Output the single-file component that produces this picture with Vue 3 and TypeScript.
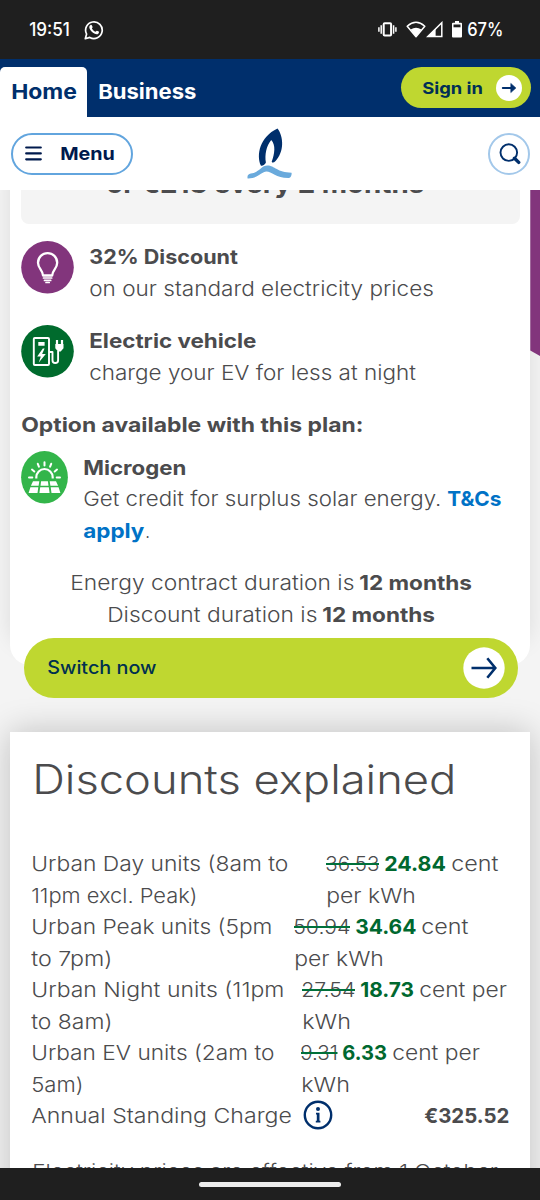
<script setup lang="ts">
import { h, type FunctionalComponent } from 'vue'

interface RunProps { t: string; w: number; s?: number; b?: number; lh?: number; strike?: boolean }

// One run of text, set to a fixed measure so that columns and lines keep their widths.
const Run: FunctionalComponent<RunProps> = (p) => {
  const lh = p.lh ?? 31.5
  const base = p.b ?? 22
  return h('svg', { class: 'run', width: p.w, height: lh }, [
    h('text', {
      x: -0.8, y: base, textLength: p.w + 1.2, lengthAdjust: 'spacingAndGlyphs', 'font-size': p.s ?? 20.3,
    }, p.t),
    p.strike ? h('rect', { class: 'strike', x: 0, y: base - 8, width: p.w, height: 2 }) : null,
  ])
}
Run.props = { t: String, w: Number, s: Number, b: Number, lh: Number, strike: Boolean }

interface Cell { t: string; w: number }
interface Rate { label: Cell[]; offset: number; old: Cell; price: Cell; unit: Cell; rest: Cell }

const rates: Rate[] = [
  { label: [{ t: 'Urban Day units (8am to', w: 256 }, { t: '11pm excl. Peak)', w: 165 }], offset: 294.5, old: { t: '36.53', w: 53 }, price: { t: '24.84', w: 60.5 }, unit: { t: 'cent', w: 46 }, rest: { t: 'per kWh', w: 88.5 } },
  { label: [{ t: 'Urban Peak units (5pm', w: 240 }, { t: 'to 7pm)', w: 80 }], offset: 262.5, old: { t: '50.94', w: 56 }, price: { t: '34.64', w: 60 }, unit: { t: 'cent', w: 46 }, rest: { t: 'per kWh', w: 88.5 } },
  { label: [{ t: 'Urban Night units (11pm', w: 252 }, { t: 'to 8am)', w: 80 }], offset: 270.5, old: { t: '27.54', w: 53 }, price: { t: '18.73', w: 52.5 }, unit: { t: 'cent per', w: 86.5 }, rest: { t: 'kWh', w: 47.5 } },
  { label: [{ t: 'Urban EV units (2am to', w: 242 }, { t: '5am)', w: 51 }], offset: 269, old: { t: '9.31', w: 36.5 }, price: { t: '6.33', w: 43.5 }, unit: { t: 'cent per', w: 86.5 }, rest: { t: 'kWh', w: 47.5 } },
]
</script>

<template>
  <div class="screen">
    <div class="status">
      <Run class="medium" t="19:51" :w="39.5" :s="18" :lh="24" :b="19" />
      <svg class="wa" width="20" height="20" viewBox="0 0 20 20">
        <path d="M1.3 18.7l1.3-4.6A8.3 8.3 0 1 1 5.8 17.400z" fill="none" stroke="#fff" stroke-width="1.7" stroke-linejoin="round" />
        <path d="M6.300 5.200c.6-.6 1.200-.5 1.500.1l.8 1.800c.1.500-.5 1-.7 1.400.9 1.600 2 2.600 3.600 3.300.5-.3.900-1.200 1.400-1.100l1.900.9c.5.400.1 1.500-.5 2.100-2.500 2.200-9.400-3.400-9-6.700 0-.6.5-1.400 1-1.800z" fill="#fff" />
      </svg>
      <span class="grow"></span>
      <svg class="vib" width="19" height="15" viewBox="0 0 19 15">
        <rect x="5.700" y="1.300" width="7.400" height="12.200" rx="1" fill="none" stroke="#fff" stroke-width="2" />
        <path d="M3.200 3.200v8.600M.9 5.200v4.500M15.600 3.200v8.600M17.900 5.200v4.500" stroke="#fff" stroke-width="1.500" />
      </svg>
      <svg class="wifi" width="20" height="17" viewBox="0 0 20 17">
        <path d="M1.200 5.200Q10-2.600 18.800 5.200L10 15.700z" fill="none" stroke="#fff" stroke-width="1.500" stroke-linejoin="round" />
        <path d="M4.600 8.500Q10 4.800 15.400 8.500L10 15.800z" fill="#fff" />
      </svg>
      <svg class="cell" width="17" height="17" viewBox="0 0 17 17">
        <path d="M1.800 15.500L15.800 1.700v13.800z" fill="none" stroke="#fff" stroke-width="1.500" />
        <path d="M1 16.100L9.600 7.700v8.400z" fill="#fff" />
      </svg>
      <svg class="bat" width="10" height="17" viewBox="0 0 10 17">
        <path d="M3 0h4v1.700h2q1 0 1 1V15.500q0 1-1 1H1q-1 0-1-1V2.700q0-1 1-1h2z" fill="#fff" />
        <path d="M1.500 3.500h7v2.800h-7z" fill="#1f1f1f" />
      </svg>
      <Run class="medium" t="67%" :w="35" :s="18" :lh="24" :b="19" />
    </div>

    <nav class="topbar">
      <div class="tab"><Run t="Home" :w="64.500" :s="20.5" /></div>
      <div class="biz"><Run t="Business" :w="97" :s="20.5" /></div>
      <div class="signin">
        <Run t="Sign in" :w="59.500" :s="16.5" :lh="24" :b="17.500" />
        <svg width="26" height="26" viewBox="0 0 26 26">
          <circle cx="13" cy="13" r="13" fill="#fff" />
          <path d="M6.800 13h9.500" stroke="#002f6c" stroke-width="2" stroke-linecap="round" />
          <path d="M14.800 8.400l5.100 4.600-5.100 4.600z" fill="#002f6c" stroke="#002f6c" stroke-width=".6" stroke-linejoin="round" />
        </svg>
      </div>
    </nav>

    <header class="header">
      <div class="menu">
        <svg width="17" height="15" viewBox="0 0 17 15"><path d="M1.200 1.500h14.600M1.200 7.400h14.600M1.200 13.300h14.600" stroke="#001a4d" stroke-width="2.200" stroke-linecap="round" /></svg>
        <Run t="Menu" :w="53.500" :s="18" :lh="24" :b="18" />
      </div>
      <svg class="logo" width="46" height="54" viewBox="0 0 46 54">
        <path d="M13.800 38.500C9.300 28 12.500 10 30.500 1.500 36.700 9.500 37.500 25 28.300 34.300c-1.400 1.500-3.200 1.800-3.600.4C27.600 27 29 18 24.200 13 19.200 19 17.600 28 18.900 35.500c-.8 1.800-3.400 3.800-5.100 3z" fill="#002f6c" />
        <path d="M.6 51.500c-.6-3 .6-4.800 3.200-5.100C12 46 14 38.600 20.500 38.600c7 0 10 7.100 24 7.200.6 1.800-.6 4.900-2.500 5.200C29.500 51.300 24.500 44.500 19.500 44.500 14.500 44.500 11 51.800.6 51.500z" fill="#6aaadc" />
      </svg>
      <div class="search">
        <svg width="22" height="22" viewBox="0 0 22 22">
          <circle cx="9.800" cy="9.600" r="8.300" fill="none" stroke="#002f6c" stroke-width="1.900" />
          <path d="M15.500 15.300l4.200 4.100" stroke="#002f6c" stroke-width="3.400" stroke-linecap="round" />
        </svg>
      </div>
    </header>

    <main class="page">
      <section class="plan">
        <div class="price"><Run class="bold" t="or €213 every 2 months" :w="317" :s="25" :lh="32" :b="26" /></div>

        <div class="feature">
          <svg class="badge" width="53" height="53" viewBox="0 0 53 53">
            <circle cx="26.500" cy="26.300" r="26.300" fill="#82357c" />
            <path d="M22 34.500c0-5-5-6.800-5-12.800a9.600 9.600 0 0 1 19.200 0c0 6-5 7.800-5 12.800z" fill="none" stroke="#fff" stroke-width="2.300" stroke-linejoin="round" />
            <path d="M22.500 37h8.200M23.500 39.400h6.200M25 41.500h3.200" stroke="#fff" stroke-width="1.700" stroke-linecap="round" />
          </svg>
          <div class="copy">
            <Run class="bold" t="32% Discount" :w="147.500" />
            <Run t="on our standard electricity prices" :w="343.500" />
          </div>
        </div>

        <div class="feature">
          <svg class="badge" width="53" height="53" viewBox="0 0 53 53">
            <circle cx="26.500" cy="26.300" r="26.300" fill="#006b2d" />
            <g fill="none" stroke="#fff" stroke-width="1.900" stroke-linejoin="round">
              <rect x="12.800" y="13" width="15.200" height="27" rx="1" />
              <path d="M28 27h3.500v8.200q0 2.800 2.800 2.800t2.800-2.800V26" />
              <path d="M36 15v4M41 15v4" stroke-width="2.200" />
            </g>
            <path d="M17.300 17h6.300v3.800h-6.300zM21.800 23.500l-5.600 8h3.600l-2 6 7-8.500h-3.700l2.500-5.500zM34.300 19h8.200v4.200l-2.800 3.300h-2.700l-2.700-3.300z" fill="#fff" />
          </svg>
          <div class="copy">
            <Run class="bold" t="Electric vehicle" :w="166" />
            <Run t="charge your EV for less at night" :w="325.500" />
          </div>
        </div>

        <div class="option"><Run class="bold" t="Option available with this plan:" :w="341" /></div>

        <div class="feature micro">
          <svg class="badge" width="47" height="53" viewBox="0 0 47 53">
            <ellipse cx="23.500" cy="26.300" rx="23.400" ry="26.200" fill="#33b54a" />
            <path d="M15.300 27.500v-1.300a8.200 8.200 0 0 1 16.400 0v1.300" fill="none" stroke="#fff" stroke-width="2.200" />
            <path d="M23.500 11.200v3.200M16.800 12.800l1.100 2.900M30.200 12.800l-1.100 2.900M11 18.600l2.300 1.900M36 18.600l-2.300 1.900M8 26.500h3.300M35.700 26.500H39" stroke="#fff" stroke-width="2" stroke-linecap="round" />
            <path d="M12 30.300h6.300l-.7 4.500h-7.700zM20.100 30.300h6.800l.6 4.500h-8zM28.700 30.300H35l2.100 4.500h-7.700zM9.400 36.200h7.900l-.8 5.800H7.600zM19.200 36.200h8.600l.8 5.800H18.400zM29.700 36.200h7.900l1.800 5.800h-8.900z" fill="#fff" />
          </svg>
          <div class="copy">
            <Run class="bold" t="Microgen" :w="102" />
            <div class="line wide"><Run t="Get credit for surplus solar energy." :w="357" /><Run class="bold link" t="T&amp;Cs" :w="53" /></div>
            <div class="line tight"><Run class="bold link" t="apply" :w="60" /><Run t="." :w="3.500" /></div>
          </div>
        </div>

        <div class="terms">
          <div class="line"><Run t="Energy contract duration is" :w="283" /><Run class="bold" t="12 months" :w="111.500" /></div>
          <div class="line"><Run t="Discount duration is" :w="209" /><Run class="bold" t="12 months" :w="111.500" /></div>
        </div>
      </section>
      <svg class="ribbon" width="10" height="167" viewBox="0 0 10 167"><path d="M.3 0H10v166L.3 160.500z" fill="#82357c" /></svg>

      <div class="switch">
        <Run t="Switch now" :w="108" :s="18.200" />
        <svg width="42" height="42" viewBox="0 0 42 42">
          <circle cx="21" cy="21" r="20.700" fill="#fff" />
          <path d="M8.500 21h23.500M24.300 11.200l8 9.800-8 9.800" fill="none" stroke="#002f6c" stroke-width="2.600" />
        </svg>
      </div>

      <section class="discounts">
        <Run class="title" t="Discounts explained" :w="423" :s="40.500" :lh="60" :b="42" />
        <div class="rates">
          <div v-for="r in rates" :key="r.label[0].t" class="rate">
            <div class="label" :style="{ width: r.offset + 'px' }">
              <Run v-for="l in r.label" :key="l.t" :t="l.t" :w="l.w" />
            </div>
            <div class="value">
              <div class="line">
                <Run :t="r.old.t" :w="r.old.w" strike /><Run class="bold green" :t="r.price.t" :w="r.price.w" /><Run :t="r.unit.t" :w="r.unit.w" />
              </div>
              <Run class="rest" :t="r.rest.t" :w="r.rest.w" />
            </div>
          </div>
          <div class="rate standing">
            <Run t="Annual Standing Charge" :w="259.500" />
            <svg class="info" width="30" height="30" viewBox="0 0 30 30">
              <circle cx="15" cy="15" r="13.200" fill="none" stroke="#002f6c" stroke-width="2.400" />
              <circle cx="15" cy="9" r="2" fill="#002f6c" />
              <path d="M13 12.800h3.500v8h.9v1.600h-4.600v-1.600h1v-6.400h-.8z" fill="#002f6c" />
            </svg>
            <span class="grow"></span>
            <Run class="bold" t="€325.52" :w="84" />
          </div>
        </div>
        <Run class="note" t="Electricity prices are effective from 1 October" :w="464.500" />
      </section>
    </main>

    <footer class="gesture"><span class="pill"></span></footer>
  </div>
</template>

<style>
body { margin: 0; }
.run { display: block; flex: none; overflow: visible; }
.run text { fill: currentColor; }
.run .strike { fill: #00703a; }
</style>

<style scoped>
.screen { width: 540px; height: 1200px; display: flex; flex-direction: column; overflow: hidden; background: #f1f1f1; color: #4b4b4d; font-family: Inter, "Open Sans", sans-serif; font-weight: 320; }
.screen svg { flex: none; }
.grow { flex: 1; }
.bold { font-weight: 700; }
.medium { font-weight: 500; }
.link { color: #0072c6; }
.green { color: #00682f; }

.status { box-sizing: border-box; height: 58.500px; padding: 17px 37.500px 0 30px; display: flex; align-items: flex-start; background: #1f1f1f; color: #fff; }
.wa { margin: 3px 0 0 14.500px; }
.vib { margin: 5px 0 0 0; }
.wifi { margin: 4px 0 0 9px; }
.cell { margin: 4px 0 0 0; }
.bat { margin: 3.500px 0 0 8.500px; }
.status .bat + .run { margin-left: 6px; }

.topbar { box-sizing: border-box; height: 58.500px; padding: 8.500px 9.500px 0 0; display: flex; align-items: flex-start; background: #002f6c; color: #fff; font-weight: 700; }
.tab { box-sizing: border-box; width: 87px; height: 50px; padding: 10px 0 0 11.500px; background: #fff; color: #002f6c; border-radius: 5px 5px 0 0; }
.biz { flex: 1; padding: 10px 0 0 12px; }
.signin { box-sizing: border-box; width: 129.500px; height: 41px; padding: 0 8.500px 0 22px; border-radius: 21px; display: flex; align-items: center; justify-content: space-between; background: #bfd730; color: #002f55; font-weight: 650; }

.header { box-sizing: border-box; height: 73px; flex: none; padding: 0 10px 0 10.500px; display: flex; align-items: center; justify-content: space-between; background: #fff; }
.menu { box-sizing: border-box; width: 122px; height: 42px; padding: 0 16.500px 0 12.500px; border: 2px solid #62a5de; border-radius: 21px; display: flex; align-items: center; justify-content: space-between; color: #001a4d; font-weight: 650; }
.logo { margin: 0 35px 0 -45px; }
.search { box-sizing: border-box; width: 42px; height: 42px; padding-left: 1px; border: 2px solid #a3c8ea; border-radius: 50%; display: flex; align-items: center; justify-content: center; }

.page { position: relative; flex: 1; min-height: 0; overflow: hidden; padding: 0 9.700px 0 10.300px; background: #f4f4f4; }
.ribbon { position: absolute; right: 0; top: 0; }
.plan { position: relative; box-sizing: border-box; height: 475px; padding: 0 10.300px 0 10.900px; background: #fff; border-radius: 0 0 20px 20px; box-shadow: 0 -20px 22px rgba(0, 0, 0, .1); display: flex; flex-direction: column; }
.price { flex: none; height: 33.500px; margin-bottom: 17px; display: flex; justify-content: center; align-items: flex-start; background: #f4f4f4; border-radius: 0 0 8px 8px; overflow: hidden; }
.price .run { margin: -22.800px 10px 0 0; }
.feature { flex: none; height: 84px; display: flex; gap: 16px; }
.copy { padding-top: 1.800px; }
.option { padding: 1.800px 0 0 .8px; }
.micro { height: 96px; margin-top: 9.200px; }
.line { display: flex; gap: 6px; }
.wide { gap: 7px; }
.tight { gap: 2px; }
.terms { margin: 21.200px 0 0 1px; display: flex; flex-direction: column; align-items: center; }

.switch { position: relative; z-index: 1; box-sizing: border-box; width: 494px; height: 60px; margin: -27.500px 0 0 13.300px; padding: 0 12.500px 0 24.200px; border-radius: 30px; display: flex; align-items: center; justify-content: space-between; background: #bfd730; color: #00304f; font-weight: 500; }

.discounts { margin-top: 34.500px; height: 500px; padding: 20px 21px 0 21.500px; background: #fff; box-shadow: 0 0 32px rgba(0, 0, 0, .22); }
.title { margin-left: 1.500px; }
.rates { margin-top: 37.400px; }
.rate { display: flex; height: 63px; }
.label { flex: none; }
.label .run:first-child { margin-left: .5px; }
.value .rest { margin-left: 1px; }
.standing { height: 31.500px; }
.info { margin: -1px 0 0 11.500px; }
.note { margin: 24px 0 0 1px; }

.gesture { height: 32px; flex: none; background: #1f1f1f; display: flex; justify-content: center; }
.pill { width: 142px; height: 5.500px; margin-top: 13.500px; border-radius: 3px; background: #ececec; }
</style>
